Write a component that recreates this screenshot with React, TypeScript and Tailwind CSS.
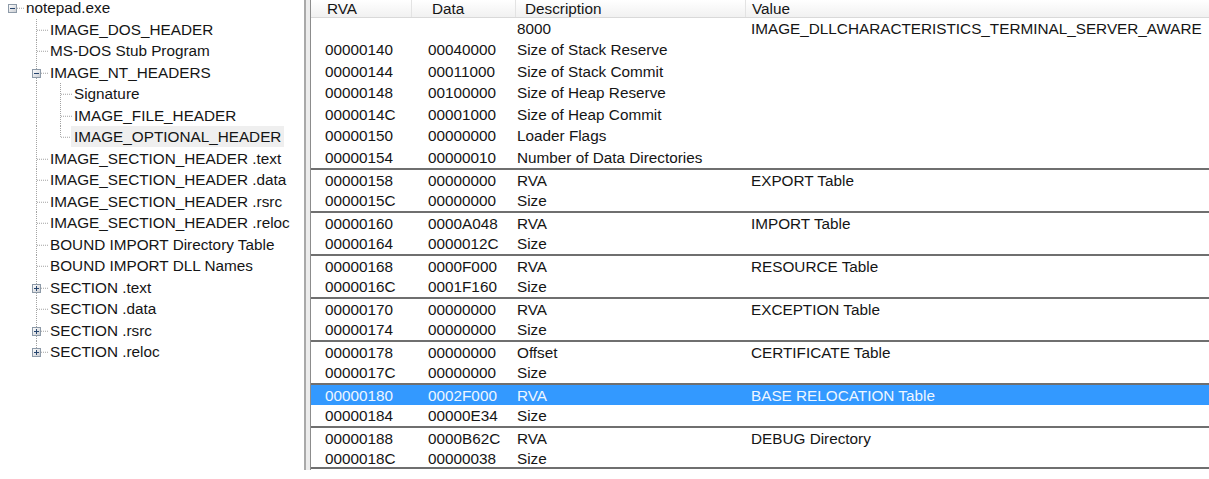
import React from "react";

type TreeItem = {
  label: string;
  depth: number;
  box?: "minus" | "plus";
  last?: boolean;
  selected?: boolean;
};

const tree: TreeItem[] = [
  { label: "notepad.exe", depth: 0, box: "minus" },
  { label: "IMAGE_DOS_HEADER", depth: 1 },
  { label: "MS-DOS Stub Program", depth: 1 },
  { label: "IMAGE_NT_HEADERS", depth: 1, box: "minus" },
  { label: "Signature", depth: 2 },
  { label: "IMAGE_FILE_HEADER", depth: 2 },
  { label: "IMAGE_OPTIONAL_HEADER", depth: 2, last: true, selected: true },
  { label: "IMAGE_SECTION_HEADER .text", depth: 1 },
  { label: "IMAGE_SECTION_HEADER .data", depth: 1 },
  { label: "IMAGE_SECTION_HEADER .rsrc", depth: 1 },
  { label: "IMAGE_SECTION_HEADER .reloc", depth: 1 },
  { label: "BOUND IMPORT Directory Table", depth: 1 },
  { label: "BOUND IMPORT DLL Names", depth: 1 },
  { label: "SECTION .text", depth: 1, box: "plus" },
  { label: "SECTION .data", depth: 1 },
  { label: "SECTION .rsrc", depth: 1, box: "plus" },
  { label: "SECTION .reloc", depth: 1, box: "plus", last: true },
];

type Row = {
  rva: string;
  data: string;
  desc: string;
  value?: string;
  sep?: boolean;
  selected?: boolean;
};

const rows: Row[] = [
  { rva: "", data: "", desc: "8000", value: "IMAGE_DLLCHARACTERISTICS_TERMINAL_SERVER_AWARE" },
  { rva: "00000140", data: "00040000", desc: "Size of Stack Reserve" },
  { rva: "00000144", data: "00011000", desc: "Size of Stack Commit" },
  { rva: "00000148", data: "00100000", desc: "Size of Heap Reserve" },
  { rva: "0000014C", data: "00001000", desc: "Size of Heap Commit" },
  { rva: "00000150", data: "00000000", desc: "Loader Flags" },
  { rva: "00000154", data: "00000010", desc: "Number of Data Directories" },
  { rva: "00000158", data: "00000000", desc: "RVA", value: "EXPORT Table", sep: true },
  { rva: "0000015C", data: "00000000", desc: "Size" },
  { rva: "00000160", data: "0000A048", desc: "RVA", value: "IMPORT Table", sep: true },
  { rva: "00000164", data: "0000012C", desc: "Size" },
  { rva: "00000168", data: "0000F000", desc: "RVA", value: "RESOURCE Table", sep: true },
  { rva: "0000016C", data: "0001F160", desc: "Size" },
  { rva: "00000170", data: "00000000", desc: "RVA", value: "EXCEPTION Table", sep: true },
  { rva: "00000174", data: "00000000", desc: "Size" },
  { rva: "00000178", data: "00000000", desc: "Offset", value: "CERTIFICATE Table", sep: true },
  { rva: "0000017C", data: "00000000", desc: "Size" },
  { rva: "00000180", data: "0002F000", desc: "RVA", value: "BASE RELOCATION Table", sep: true, selected: true },
  { rva: "00000184", data: "00000E34", desc: "Size" },
  { rva: "00000188", data: "0000B62C", desc: "RVA", value: "DEBUG Directory", sep: true },
  { rva: "0000018C", data: "00000038", desc: "Size" },
];

const H = 21.5;
const MID = 10.75;

// tree connector lines + expander box for one row
const Connector = ({ item, index }: { item: TreeItem; index: number }) => {
  const w = item.depth * 24 + 26;
  const cx = 12 + item.depth * 24;
  const childOfNt = item.depth === 2;
  const cy = Math.round(MID);
  return (
    <svg width={w} height={H} className="shrink-0">
      <defs>
        <linearGradient id={`bx${index}`} x1="0" y1="0" x2="1" y2="1">
          <stop offset="0" stopColor="#ffffff" />
          <stop offset="1" stopColor="#c9ccd1" />
        </linearGradient>
      </defs>
      <g stroke="#a3a3a3" strokeDasharray="1 1" strokeWidth="1" fill="none">
        {childOfNt && <line x1="36.5" y1="0" x2="36.5" y2={H} />}
        {item.depth > 0 && (
          <line x1={cx + 0.5} y1="0" x2={cx + 0.5} y2={item.last ? MID : H} />
        )}
        {item.depth === 1 && item.box === "minus" && (
          <line x1="60.5" y1={MID + 5} x2="60.5" y2={H} />
        )}
        <line x1={cx + 1} y1={MID + 0.5} x2={cx + 12} y2={MID + 0.5} />
      </g>
      {item.box && (
        <g>
          <rect
            x={cx - 4 + 0.5}
            y={cy - 4 + 0.5}
            width="8"
            height="8"
            fill={`url(#bx${index})`}
            stroke="#8d9aa8"
          />
          <line x1={cx - 2} y1={cy + 0.5} x2={cx + 3} y2={cy + 0.5} stroke="#27456e" />
          {item.box === "plus" && (
            <line x1={cx + 0.5} y1={cy - 2} x2={cx + 0.5} y2={cy + 3} stroke="#27456e" />
          )}
        </g>
      )}
    </svg>
  );
};

const TreePane = () => (
  <div className="-mt-[3px] w-[304px] shrink-0">
    {tree.map((item, i) => (
      <div key={i} className="flex h-[21.5px] items-center">
        <Connector item={item} index={i} />
        <span
          className={
            item.selected
              ? "-ml-[3px] flex h-[21px] items-center bg-[#efefef] px-[3px] leading-[15px] whitespace-nowrap"
              : "leading-[15px] whitespace-nowrap"
          }
        >
          {item.label}
        </span>
      </div>
    ))}
  </div>
);

const TablePane = () => (
  <div className="flex-1">
    <div className="grid h-[17.5px] grid-cols-[101px_104px_230px_1fr] border-b border-[#d9d9d9] bg-gradient-to-b from-white to-[#f1f1f1] leading-[17px]">
      <div className="border-r border-[#e3e3e3] pl-[16px]">RVA</div>
      <div className="border-r border-[#e3e3e3] pl-[20px]">Data</div>
      <div className="border-r border-[#e3e3e3] pl-[9px]">Description</div>
      <div className="pl-[6px]">Value</div>
    </div>
    {rows.map((r, i) => (
      <div
        key={i}
        className={[
          "grid h-[21.5px] grid-cols-[101px_104px_230px_1fr] items-center whitespace-nowrap",
          r.sep ? "border-t-2 border-[#6f6f6f]" : "",
          i === rows.length - 1 ? "border-b-2 border-[#6f6f6f]" : "",
          r.selected ? "bg-[#3399ff] text-[#eef6ff]" : "",
        ].join(" ")}
      >
        <div className="pl-[14px]">{r.rva}</div>
        <div className="pl-[16px]">{r.data}</div>
        <div className="pl-[1px]">{r.desc}</div>
        <div className="pl-[5px]">{r.value ?? ""}</div>
      </div>
    ))}
  </div>
);

export default function App() {
  return (
    <div className="flex h-[479px] w-[1209px] overflow-hidden bg-white font-['Liberation_Sans',Arial,sans-serif] text-[15.3px] text-[#151515]">
      <TreePane />
      <div className="h-[470px] w-[7px] shrink-0 border-l-2 border-r border-l-[#a9a9a9] border-r-[#8c8c8c] bg-[#ececec]" />
      <TablePane />
    </div>
  );
}
